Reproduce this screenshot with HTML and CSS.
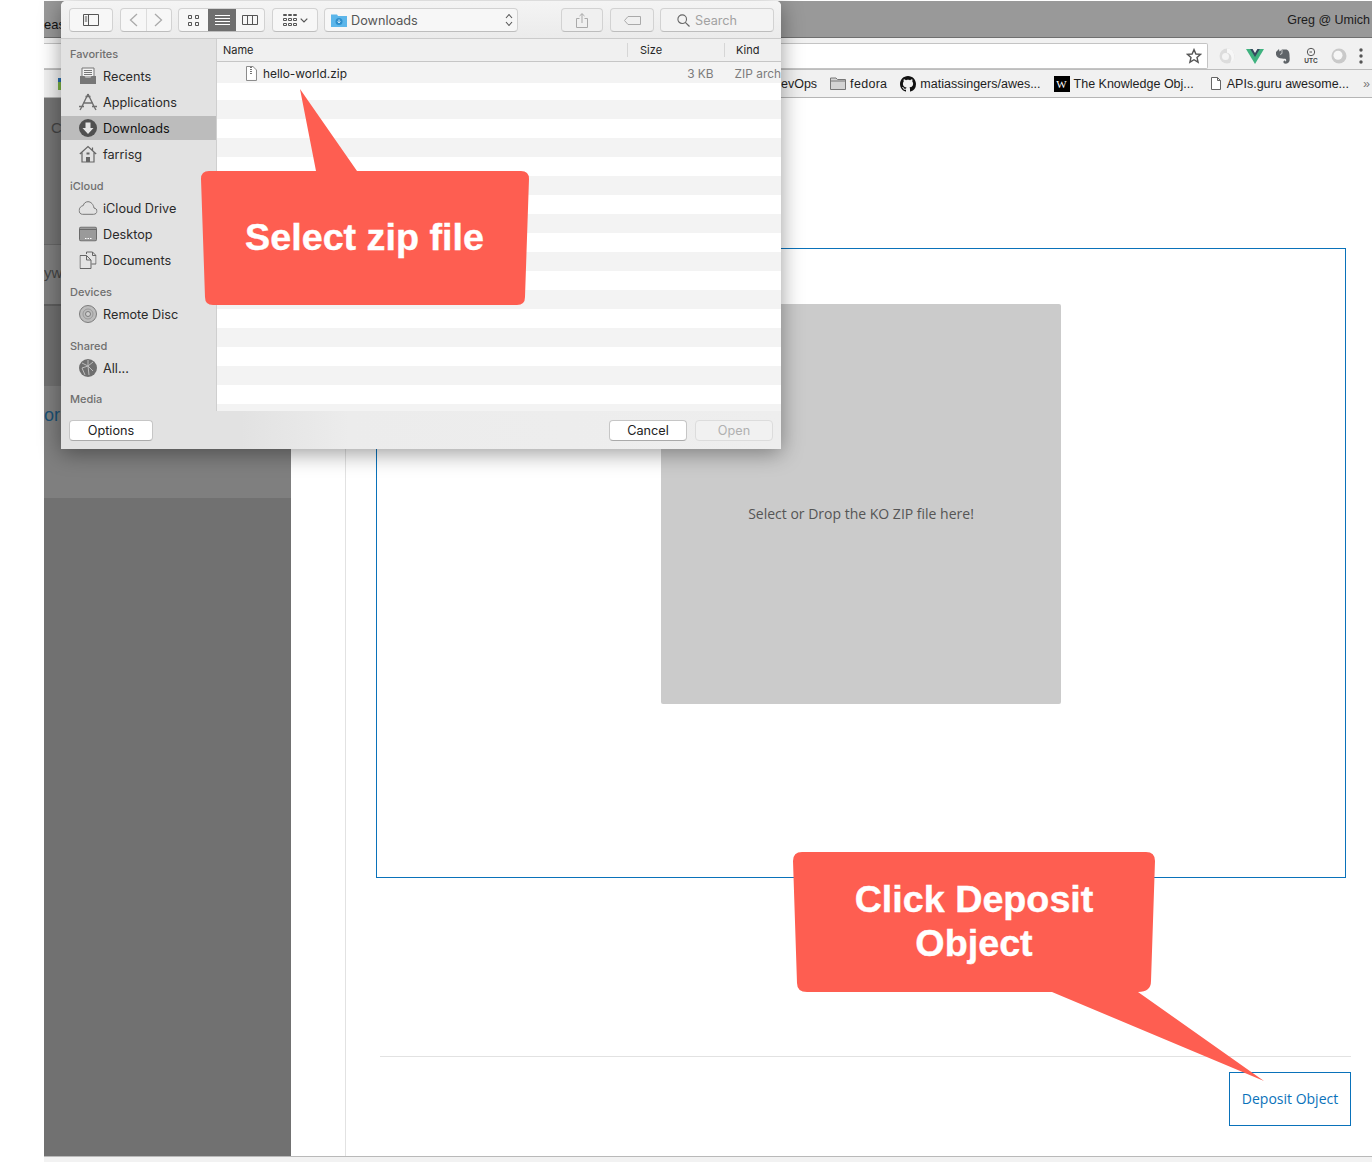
FILE: index.html
```html
<!DOCTYPE html>
<html>
<head>
<meta charset="UTF-8" />
<title>Deposit Object</title>
<link rel="stylesheet" href="styles.css">
</head>
<body>
<div class="browser">
  <div class="titlebar">
    <span class="tabtext">eas</span>
    <span class="profile">Greg @ Umich</span>
  </div>
  <div class="toolbar">
    <div class="address">
      <svg class="star" width="16" height="16" viewBox="0 0 16 16"><path d="M8 1.6l1.9 4.4 4.7.4-3.6 3.1 1.1 4.7L8 11.7l-4.1 2.5L5 9.5 1.4 6.4l4.7-.4z" fill="none" stroke="#555" stroke-width="1.4"/></svg>
    </div>
    <div class="extensions">
      <svg width="18" height="18" viewBox="0 0 18 18"><circle cx="9" cy="9" r="7.5" fill="#dcdcdc"/><path d="M9 1.500a7.500 7.500 0 0 1 3 14.300c2.500-3 2-9-3-10z" fill="#f7f7f7"/><circle cx="7.500" cy="9.500" r="3.500" fill="#f4f4f4"/></svg>
      <svg width="18" height="18" viewBox="0 0 18 18"><polygon points="0,2 18,2 9,17" fill="#3fb27f"/><polygon points="4.2,2 13.8,2 9,10" fill="#35495e"/><polygon points="6.6,2 11.4,2 9,6" fill="#f1f1f1"/></svg>
      <svg width="18" height="18" viewBox="0 0 18 18"><path d="M2 5l3-3 .5 2.500L8 2.500h3.500C14.500 2.500 15.500 5 15.500 8c0 2.500.5 4 0 6-.5 2-3 3-5 2.500-1.500-.4-1.500-3 .5-3l.5 1c1 0 .8-1.500.3-2.500-1-.5-2.300 0-3.800-.5C5 11.500 2.500 10 2 7.500z" fill="#5f6468"/><path d="M8 3v3.500L6 7.500" fill="none" stroke="#f1f1f1" stroke-width=".7"/></svg>
      <svg width="18" height="18" viewBox="0 0 18 18"><circle cx="9" cy="5" r="3.700" fill="none" stroke="#555" stroke-width="1"/><path d="M7.500 5H10" stroke="#555" stroke-width="1"/><text class="utc" x="9" y="16" text-anchor="middle">UTC</text></svg>
      <svg width="18" height="18" viewBox="0 0 18 18"><circle cx="9" cy="9" r="7.500" fill="#c9c9c9"/><circle cx="8" cy="8.300" r="4.500" fill="#f6f6f6"/></svg>
      <svg width="6" height="18" viewBox="0 0 6 18"><circle cx="3" cy="3" r="1.700" fill="#555"/><circle cx="3" cy="9" r="1.700" fill="#555"/><circle cx="3" cy="15" r="1.700" fill="#555"/></svg>
    </div>
  </div>
  <div class="bookmarks">
    <span class="appsicon"></span>
    <div class="bookmarklist">
      <span class="bm bm-devops">DevOps</span>
      <span class="bm bm-fedora">
        <svg width="16" height="13" viewBox="0 0 16 13"><path d="M.5 12.500V1h5.500l1.500 1.500h8v10z" fill="#d4d4d4" stroke="#777"/><path d="M.5 4h15" stroke="#777"/></svg>
        fedora</span>
      <span class="bm bm-github">
        <svg width="16" height="16" viewBox="0 0 16 16"><path d="M8 0C3.580 0 0 3.580 0 8c0 3.540 2.290 6.530 5.470 7.590.4.070.55-.17.55-.38 0-.19-.01-.82-.01-1.490-2.010.37-2.530-.49-2.690-.94-.09-.23-.48-.94-.82-1.130-.28-.15-.68-.52-.01-.53.630-.01 1.080.58 1.230.82.720 1.210 1.870.87 2.330.66.070-.52.280-.87.510-1.070-1.780-.2-3.640-.89-3.640-3.950 0-.87.310-1.590.820-2.150-.08-.2-.36-1.020.08-2.120 0 0 .67-.21 2.200.82.640-.18 1.320-.27 2-.27s1.360.09 2 .27c1.530-1.040 2.200-.82 2.200-.82.440 1.100.16 1.920.08 2.120.51.560.820 1.270.820 2.150 0 3.070-1.870 3.750-3.650 3.950.29.25.54.73.54 1.480 0 1.070-.01 1.930-.01 2.200 0 .21.150.46.550.38A8.010 8.010 0 0 0 16 8c0-4.420-3.580-8-8-8z" fill="#111"/></svg>
        matiassingers/awes...</span>
      <span class="bm bm-know"><span class="wicon">W</span>The Knowledge Obj...</span>
      <span class="bm bm-apis">
        <svg width="10" height="13" viewBox="0 0 10 13"><path d="M.5.5h6l3 3v9H.5z M6.500.5v3h3" fill="#fff" stroke="#666"/></svg>
        APIs.guru awesome...</span>
      <span class="more">»</span>
    </div>
  </div>
  <div class="content">
    <div class="side">
      <div class="band band-a"><span class="sidetext">C</span></div>
      <div class="band band-b"><span class="sidetext">yw</span></div>
      <div class="band band-c"></div>
      <div class="band band-d"><span class="sidelink">or</span></div>
      <div class="band band-e"></div>
    </div>
    <div class="main">
      <div class="dropbox">
        <div class="dropzone">Select or Drop the KO ZIP file here!</div>
      </div>
      <div class="actions">
        <a class="deposit">Deposit Object</a>
      </div>
    </div>
  </div>
  <div class="statusbar"></div>
</div>

<div class="dialog">
  <div class="dlg-toolbar">
    <div class="tb tb-sidebar"><svg width="16" height="12" viewBox="0 0 16 12"><path d="M.5.500h15v11H.5zM5.500.5v11M1.800 3h2.400M1.800 5h2.400M1.800 7h2.400" fill="none" stroke="#555"/></svg></div>
    <div class="tb tb-nav">
      <span class="seg"><svg width="9" height="14" viewBox="0 0 9 14"><path d="M8 1L1.500 7 8 13" fill="none" stroke="#aaa" stroke-width="1.300"/></svg></span>
      <span class="seg"><svg width="9" height="14" viewBox="0 0 9 14"><path d="M1 1l6.500 6L1 13" fill="none" stroke="#aaa" stroke-width="1.300"/></svg></span>
    </div>
    <div class="tb tb-views">
      <span class="seg seg-grid"><svg width="11" height="11" viewBox="0 0 11 11"><path d="M.5.500h3v3h-3zM7.500.500h3v3h-3zM.5 7.500h3v3h-3zM7.500 7.500h3v3h-3z" fill="none" stroke="#555"/></svg></span>
      <span class="seg seg-list"><svg width="15" height="11" viewBox="0 0 15 11"><path d="M0 .5h15M0 3.500h15M0 6.500h15M0 9.500h15" stroke="#fff"/></svg></span>
      <span class="seg seg-cols"><svg width="16" height="10" viewBox="0 0 16 10"><path d="M.5.500h15v9H.5zM5.500.5v9M10.500.5v9" fill="none" stroke="#555"/></svg></span>
    </div>
    <div class="tb tb-arrange">
      <svg width="14" height="12" viewBox="0 0 14 12"><path d="M.5.500h3v1h-3zM5.500.5h3v1h-3zM10.500.5h3v1h-3zM.5 4.500h3v2h-3zM5.500 4.500h3v2h-3zM10.500 4.500h3v2h-3zM.5 9.500h3v2h-3zM5.500 9.500h3v2h-3zM10.500 9.500h3v2h-3z" fill="none" stroke="#555"/></svg>
      <svg width="8" height="5" viewBox="0 0 8 5"><path d="M.7.700L4 4 7.300.7" fill="none" stroke="#555" stroke-width="1.200"/></svg>
    </div>
    <div class="tb tb-path">
      <svg width="16" height="14" viewBox="0 0 16 14"><path d="M0 1.500h6l1 1.500h9v11H0z" fill="#5cb6ea"/><circle cx="8" cy="8.500" r="3.500" fill="#2f8fcc"/><path d="M8 6.500v3.500M6.500 8.500L8 10l1.500-1.500" stroke="#cfe9f9" fill="none"/></svg>
      <span class="pathname">Downloads</span>
      <svg class="stepper" width="8" height="14" viewBox="0 0 8 14"><path d="M1 5l3-3.500L7 5M1 9l3 3.500L7 9" fill="none" stroke="#555" stroke-width="1.100"/></svg>
    </div>
    <div class="tb tb-share"><svg width="12" height="15" viewBox="0 0 12 15"><path d="M3.500 5.500H.5v9h11v-9h-3M6 10V.7M3.500 3L6 .7 8.500 3" fill="none" stroke="#aaa"/></svg></div>
    <div class="tb tb-tag"><svg width="17" height="9" viewBox="0 0 17 9"><path d="M4 .5h12.500v8H4L.5 4.500z" fill="none" stroke="#aaa"/></svg></div>
    <div class="tb tb-search">
      <svg width="13" height="13" viewBox="0 0 13 13"><circle cx="5.200" cy="5.200" r="4.300" fill="none" stroke="#666" stroke-width="1.100"/><path d="M8.300 8.300L12.500 12.500" stroke="#666" stroke-width="1.200"/></svg>
      <span>Search</span>
    </div>
  </div>
  <div class="dlg-body">
    <div class="places">
      <div class="placelabel">Favorites</div>
      <div class="place">
        <svg width="18" height="18" viewBox="0 0 18 18"><path d="M3 1h12v9H3z" fill="#f2f2f2" stroke="#777"/><path d="M5 3.500h8M5 5.500h8M5 7.500h8" stroke="#777"/><path d="M1 9h4.500l1 2h5l1-2H17v8H1z" fill="#777"/></svg>
        Recents</div>
      <div class="place">
        <svg width="20" height="18" viewBox="0 0 20 18"><path d="M10 1L3.500 14.500M10 1l6.500 13.500M7.500 3.500h5M5 10h10M1 13.500h5M14 13.500h5M3.500 14.500L2 17M16.500 14.500L18 17" fill="none" stroke="#6f6f6f" stroke-width="1.400"/></svg>
        Applications</div>
      <div class="place place-on">
        <svg width="18" height="18" viewBox="0 0 18 18"><circle cx="9" cy="9" r="9" fill="#505050"/><path d="M6.500 3.500h5V9h3L9 15 3.500 9h3z" fill="#e4e4e4"/></svg>
        Downloads</div>
      <div class="place">
        <svg width="18" height="18" viewBox="0 0 18 18"><path d="M.8 9L9 1.500 17.200 9M3 7.500V17h12V7.500M13.500 2.500V5.500" fill="none" stroke="#666" stroke-width="1.200"/><path d="M7 17v-5h4v5z" fill="#666"/><path d="M7.500 7.500h3v2h-3z" fill="#666"/></svg>
        farrisg</div>

      <div class="placelabel">iCloud</div>
      <div class="place">
        <svg width="19" height="14" viewBox="0 0 19 14"><path d="M4 13.300h11c2 0 3.500-1.400 3.500-3.100 0-1.800-1.400-3-3-3.100C15 3.500 12.500.7 9.500.7 7 .7 5.300 2.300 4.800 4.500 2.500 5 .6 7 .6 9.500c0 2.300 1.500 3.800 3.400 3.800z" fill="none" stroke="#777"/></svg>
        iCloud Drive</div>
      <div class="place">
        <svg width="18" height="15" viewBox="0 0 18 15"><rect x=".5" y=".5" width="17" height="14" rx="1.500" fill="#9a9a9a" stroke="#6a6a6a"/><path d="M1 3h16" stroke="#6a6a6a"/><path d="M6 12h1.500M8.500 12H10M11 12h1.500" stroke="#fff"/></svg>
        Desktop</div>
      <div class="place">
        <svg width="17" height="18" viewBox="0 0 17 18"><path d="M7 3V1h6l3.500 3.500V13H12" fill="#e4e4e4" stroke="#666"/><path d="M.5 4.500H7L11.500 9v8.500H.5z" fill="#e4e4e4" stroke="#666"/><path d="M7 4.500V9h4.500M13 1v3.500h3.500" fill="none" stroke="#666"/></svg>
        Documents</div>

      <div class="placelabel">Devices</div>
      <div class="place">
        <svg width="18" height="18" viewBox="0 0 18 18"><circle cx="9" cy="9" r="8.500" fill="#bcbcbc" stroke="#7c7c7c"/><circle cx="9" cy="9" r="5" fill="none" stroke="#999"/><circle cx="9" cy="9" r="2.500" fill="#cfcfcf" stroke="#7c7c7c"/></svg>
        Remote Disc</div>

      <div class="placelabel">Shared</div>
      <div class="place">
        <svg width="18" height="18" viewBox="0 0 18 18"><circle cx="9" cy="9" r="9" fill="#6f6f6f"/><path d="M9 1v6l5 5M9 7l-6 2 3 7M9 7l1 9M3 4l6 3M14 3L9 7" fill="none" stroke="#bdbdbd"/></svg>
        All...</div>

      <div class="placelabel placelabel-last">Media</div>
    </div>
    <div class="files">
      <div class="colhead">
        <span class="col-name">Name</span>
        <span class="col-size">Size</span>
        <span class="col-kind">Kind</span>
      </div>
      <div class="filerow">
        <svg width="11" height="15" viewBox="0 0 11 15"><path d="M.5.500h6.500l3.500 3.500v10.500H.5z" fill="#fff" stroke="#8a8a8a"/><path d="M5 1v7" stroke="#444" stroke-dasharray="1 1" stroke-width="1.500"/></svg>
        <span class="filename">hello-world.zip</span>
        <span class="filesize">3 KB</span>
        <span class="filekind">ZIP arch</span>
      </div>
      <div class="firstgap"></div>
      <div class="stripes"></div>
    </div>
  </div>
  <div class="dlg-footer">
    <div class="btn btn-options">Options</div>
    <div class="btn btn-cancel">Cancel</div>
    <div class="btn btn-open">Open</div>
  </div>
</div>

<svg class="callout callout-zip" width="340" height="225" viewBox="0 0 340 225">
  <path class="calloutshape" d="M9 82H116L100 0 157 82H321q8 0 8 8L325 208q0 8-8 8H13q-8 0-8-8L1 90q0-8 8-8z"/>
  <text class="callouttext" x="164.500" y="161" text-anchor="middle">Select zip file</text>
</svg>
<svg class="callout callout-deposit" width="480" height="240" viewBox="0 0 480 240">
  <path class="calloutshape" d="M9 1H353q9 0 9 9L358 130q0 11-13 11L471 230 259 141H14q-10 0-10-9L0 10q0-9 9-9z"/>
  <text class="callouttext" x="181" y="61" text-anchor="middle">Click Deposit</text>
  <text class="callouttext" x="181" y="105" text-anchor="middle">Object</text>
</svg>
</body>
</html>
```

FILE: styles.css
```css
html, body {
	margin: 0;
	padding: 0;
	height: 100%;
	background: #fff;
	overflow: hidden;
}

body {
	font-family: "Liberation Sans", Arial, sans-serif;
	color: #222;
}

.browser {
	display: flex;
	flex-direction: column;
	height: 100%;
	margin-left: 44px;
	padding-top: 1px;
	box-sizing: border-box;
}

/* browser chrome, dimmed behind the sheet */
.titlebar {
	flex: none;
	display: flex;
	justify-content: space-between;
	height: 37px;
	background: #999;
	border-bottom: 1px solid #6f6f6f;
	box-sizing: border-box;
	font-size: 13px;
}

.tabtext {
	margin-top: 16px;
	color: #111;
}

.profile {
	margin-top: 12px;
	margin-right: 2px;
	font-size: 12.5px;
	color: #1c1c1c;
}

.toolbar {
	flex: none;
	display: flex;
	height: 31px;
	background: #f1f1f1;
	box-sizing: border-box;
	padding-top: 5px;
}

.address {
	flex: none;
	display: flex;
	align-items: center;
	justify-content: flex-end;
	width: 1164px;
	height: 26px;
	padding-right: 5px;
	background: #fff;
	border: 1px solid #c4c4c4;
	border-left: none;
	border-radius: 0 2px 2px 0;
	box-sizing: border-box;
}

.extensions {
	display: flex;
	align-items: center;
	gap: 10px;
	height: 26px;
	margin-left: 10px;
}

.utc {
	font-size: 6.5px;
	font-weight: bold;
	fill: #444;
}

.bookmarks {
	flex: none;
	display: flex;
	align-items: center;
	height: 29px;
	background: #f1f1f1;
	border-top: 1px solid #bdbdbd;
	border-bottom: 1px solid #b5b5b5;
	box-sizing: border-box;
	font-size: 12.5px;
	white-space: nowrap;
}

.appsicon {
	width: 4px;
	height: 12px;
	margin-left: 14px;
	background: linear-gradient(#2a6fb0 33%, #7cb342 33%);
}

.bookmarklist {
	display: flex;
	align-items: center;
	margin-left: auto;
	color: #1e1e1e;
}

.bm {
	display: flex;
	align-items: center;
	gap: 4px;
}

.bm-devops { margin-right: 13px; }
.bm-fedora { margin-right: 13px; letter-spacing: .3px; }
.bm-github { margin-right: 13px; }
.bm-know { margin-right: 17px; }
.bm-apis { gap: 6px; }

.wicon {
	width: 16px;
	height: 16px;
	background: #000;
	color: #fff;
	font-family: "Liberation Serif", serif;
	font-size: 11px;
	line-height: 16px;
	text-align: center;
}

.more {
	margin-left: 14px;
	margin-right: 2px;
	color: #777;
}

.content {
	flex: 1;
	display: flex;
	min-height: 0;
	border-bottom: 1px solid #b9b9b9;
}

.side {
	flex: none;
	display: flex;
	flex-direction: column;
	width: 247px;
	background: #717171;
	font-size: 15px;
	overflow: hidden;
}

.band {
	flex: none;
	padding-left: 7px;
	box-sizing: border-box;
}

.band-a { height: 146px; background: #757575; padding-top: 21px; color: #444; }
.band-b { height: 60px; background: #7e7e7e; border-top: 1px solid #666; padding-top: 19px; padding-left: 0; color: #444; }
.band-c { height: 82px; background: #707070; border-top: 2px solid #5e5e5e; }
.band-d { height: 112px; background: #7f7f7f; padding-top: 19px; padding-left: 0; color: #1a5075; }
.band-e { flex: 1; }

.sidelink { font-size: 18px; }

.main {
	flex: none;
	width: 995px;
	margin-left: 54px;
	padding-left: 30px;
	border-left: 1px solid #e2e2e2;
	font-family: "Open Sans", sans-serif;
	font-size: 14px;
}

.dropbox {
	display: flex;
	justify-content: center;
	width: 970px;
	height: 630px;
	margin-top: 150px;
	padding-top: 55px;
	border: 1px solid #0a72ba;
	box-sizing: border-box;
}

.dropzone {
	display: flex;
	align-items: center;
	justify-content: center;
	width: 400px;
	height: 400px;
	padding-top: 18px;
	background: #cbcbcb;
	border-radius: 2px;
	box-sizing: border-box;
	color: #555;
}

.actions {
	display: flex;
	justify-content: flex-end;
	width: 971px;
	margin-top: 178px;
	margin-left: 4px;
	padding-top: 15px;
	border-top: 1px solid #e2e2e2;
}

.deposit {
	display: flex;
	align-items: center;
	justify-content: center;
	width: 122px;
	height: 54px;
	padding-bottom: 2px;
	border: 1px solid #0a72ba;
	box-sizing: border-box;
	color: #0a72ba;
}

.statusbar {
	flex: none;
	height: 5px;
	background: #f2f2f2;
}

/* open-file sheet */
.dialog {
	position: absolute;
	left: 61px;
	top: 1px;
	display: flex;
	flex-direction: column;
	width: 720px;
	height: 448px;
	background: #ececec;
	border-radius: 5px 5px 0 0;
	box-shadow: 0 4px 22px rgba(0, 0, 0, .4);
	font-family: Inter, "Liberation Sans", sans-serif;
	font-size: 12.7px;
	color: #262626;
	overflow: hidden;
}

.dlg-toolbar {
	flex: none;
	display: flex;
	align-items: flex-start;
	height: 38px;
	padding: 7px 0 0 8px;
	background: linear-gradient(#f4f4f4, #ebebeb);
	border-bottom: 1px solid #cbcbcb;
	box-sizing: border-box;
}

.tb {
	flex: none;
	display: flex;
	align-items: center;
	justify-content: center;
	height: 24px;
	background: #f7f7f7;
	border: 1px solid #d2d2d2;
	border-bottom-color: #bdbdbd;
	border-radius: 4px;
	box-sizing: border-box;
}

.tb-sidebar { width: 44px; margin-right: 7px; }
.tb-nav { width: 52px; margin-right: 6px; }
.tb-views { width: 87px; margin-right: 7px; overflow: hidden; }
.tb-arrange { width: 46px; margin-right: 6px; gap: 3px; }
.tb-path { width: 194px; margin-right: 43px; justify-content: flex-start; padding-left: 6px; gap: 4px; }
.tb-share { width: 42px; margin-right: 7px; background: #f0f0f0; }
.tb-tag { width: 44px; margin-right: 6px; background: #f0f0f0; }
.tb-search { width: 114px; justify-content: flex-start; padding-left: 16px; gap: 5px; background: #f3f3f3; color: #a2a2a2; }

.seg {
	flex: 1;
	display: flex;
	align-items: center;
	justify-content: center;
	height: 100%;
}

.tb-nav .seg + .seg { border-left: 1px solid #dcdcdc; }
.seg-grid { flex: none; width: 29px; }
.seg-list { flex: none; width: 28px; background: #6f6f6f; }
.seg-cols { flex: none; width: 28px; }

.pathname { color: #555; }
.stepper { margin-left: auto; margin-right: 4px; }

.dlg-body {
	flex: 1;
	display: flex;
	min-height: 0;
}

.places {
	flex: none;
	width: 156px;
	padding-top: 6px;
	background: #e2e2e2;
	border-right: 1px solid #cfcfcf;
	box-sizing: border-box;
	overflow: hidden;
}

.placelabel {
	height: 18px;
	margin-top: 10px;
	padding-left: 9px;
	font-size: 11px;
	font-weight: 500;
	line-height: 18px;
	color: #6f6f6f;
}

.placelabel:first-child { margin-top: 0; }
.placelabel-last { margin-top: 9px; }

.place {
	display: flex;
	align-items: center;
	height: 26px;
	padding-left: 42px;
	position: relative;
	color: #2a2a2a;
}

.place svg {
	position: absolute;
	left: 27px;
	top: 50%;
	transform: translate(-50%, -50%);
}

.place-on {
	height: 24px;
	margin: 1px 0;
	background: #bcbcbc;
	color: #111;
}

.files {
	flex: 1;
	display: flex;
	flex-direction: column;
	min-width: 0;
	background: #fff;
}

.colhead {
	flex: none;
	display: flex;
	align-items: center;
	height: 23px;
	background: #f0f0f0;
	border-bottom: 1px solid #c6c6c6;
	box-sizing: border-box;
	font-size: 11px;
}

.colhead span { height: 14px; line-height: 14px; box-sizing: border-box; }
.col-name { width: 410px; padding-left: 6px; }
.col-size { width: 97px; padding-left: 12px; border-left: 1px solid #d6d6d6; }
.col-kind { flex: 1; padding-left: 11px; border-left: 1px solid #d6d6d6; }

.filerow {
	flex: none;
	display: flex;
	align-items: center;
	height: 21px;
	padding-top: 1px;
	padding-left: 29px;
	background: #f3f3f3;
	box-sizing: border-box;
	font-size: 11.9px;
	white-space: nowrap;
	overflow: hidden;
}

.filename { margin-left: 6px; width: 424px; }
.filesize { width: 28px; text-align: right; color: #7c7c7c; white-space: nowrap; }
.filekind { margin-left: 21px; color: #7c7c7c; }

.firstgap {
	flex: none;
	height: 17px;
}

.stripes {
	flex: 1;
	background: repeating-linear-gradient(#f3f3f3 0, #f3f3f3 19px, #fff 19px, #fff 38px);
}

.dlg-footer {
	flex: none;
	display: flex;
	align-items: flex-start;
	height: 38px;
	padding: 9px 0 0 8px;
	background: linear-gradient(90deg, #e2e2e2 25%, #ececec 40%, #eeeeee);
	box-sizing: border-box;
}

.btn {
	flex: none;
	height: 21px;
	line-height: 19px;
	text-align: center;
	background: #fff;
	border: 1px solid #c6c6c6;
	border-bottom-color: #aaa;
	border-radius: 4px;
	box-sizing: border-box;
	color: #222;
}

.btn-options { width: 84px; }
.btn-cancel { width: 78px; margin-left: auto; }
.btn-open { width: 78px; margin-left: 8px; margin-right: 8px; background: #f1f1f1; border-color: #dcdcdc; color: #b0b0b0; }

/* annotations drawn on top of the screenshot */
.callout {
	position: absolute;
}

.callout-zip { left: 200px; top: 89px; }
.callout-deposit { left: 793px; top: 851px; }

.calloutshape {
	fill: #fe5e51;
}

.callouttext {
	font-family: "Liberation Sans", Arial, sans-serif;
	font-size: 37.700px;
	font-weight: bold;
	fill: #fff;
	stroke: #fff;
	stroke-width: .4px;
}
```
